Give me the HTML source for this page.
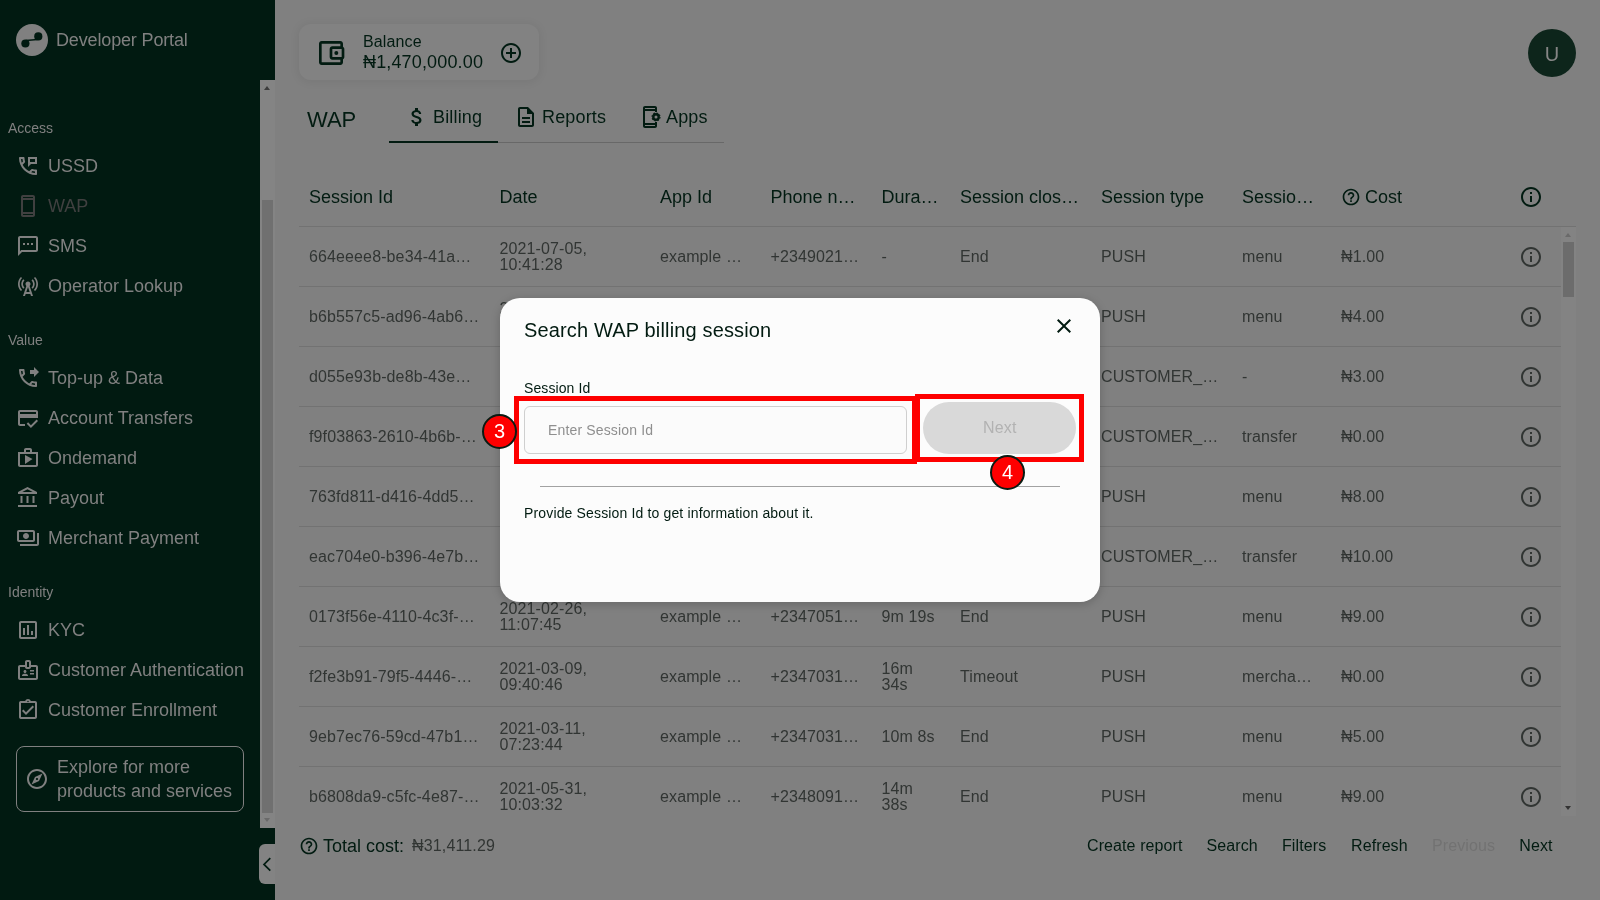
<!DOCTYPE html>
<html lang="en">
<head>
<meta charset="utf-8">
<title>Developer Portal</title>
<style>
*{box-sizing:border-box;margin:0;padding:0}
html,body{width:1600px;height:900px;overflow:hidden}
body{position:relative;background:#808080;font-family:"Liberation Sans","DejaVu Sans",sans-serif;color:#021b11}
.t{position:absolute;white-space:nowrap;line-height:20px}
svg{position:absolute;display:block}
#wrap{position:absolute;left:0;top:0;width:1600px;height:900px;will-change:transform}
#side{position:absolute;left:0;top:0;width:275px;height:900px;background:#011a11}
#side .t{color:#808080}
#side svg{fill:#808080}
#side .dis{color:#404040}
#side svg.dis{fill:#404040}
.nav{font-size:18px;left:48px}
.sec{font-size:14px;left:8px}
#sbar{position:absolute;left:260px;top:80px;width:15px;height:748px;background:#848484}
#sthumb{position:absolute;left:2px;top:120px;width:11px;height:613px;background:#707070}
.arr{position:absolute;width:0;height:0;border-left:3.5px solid transparent;border-right:3.5px solid transparent}
#explore{position:absolute;left:16px;top:746px;width:228px;height:66px;border:1px solid #808080;border-radius:8px}
#collapse{position:absolute;left:259px;top:844px;width:16px;height:40px;background:#838383;border-radius:6px 0 0 6px}
#card{position:absolute;left:299px;top:24px;width:240px;height:56px;border-radius:12px;background:#828282;box-shadow:0 1px 8px 2px rgba(0,0,0,0.06)}
#avatar{position:absolute;left:1528px;top:29px;width:48px;height:48px;border-radius:50%;background:#0d251b;color:#858585;font-size:20px;line-height:50px;text-align:center}
.hd{font-size:18px;color:#021b11;letter-spacing:0}
.c{font-size:16px;color:#313533;line-height:16px;letter-spacing:0.12px}
.ln{position:absolute;left:299px;width:1262px;height:1px;background:#727272}
.dk{fill:#021b11}
.rw{fill:#313533}
.act{font-size:16px;color:#021b11;top:836px;letter-spacing:0.1px}
#tbar{position:absolute;left:1561px;top:227px;width:15px;height:589px;background:#838383}
#tthumb{position:absolute;left:2px;top:15px;width:11px;height:55px;background:#6c6c6c}
#modal{position:absolute;left:500px;top:298px;width:600px;height:304px;border-radius:20px;background:#fcfcfc;box-shadow:0 2px 9px 1px rgba(0,0,0,0.17)}
.red{position:absolute;border:5px solid #fe0000}
.num{position:absolute;width:35px;height:35px;border-radius:50%;background:#fe0000;border:2px solid #0a1a12;color:#fff;font-size:20px;line-height:31px;text-align:center}
</style>
</head>
<body>
<div id="wrap">

<div id="side">
<svg style="left:16px;top:24px" width="32" height="32" viewBox="0 0 32 32"><circle cx="16" cy="16" r="16" fill="#808080"/><circle cx="22.3" cy="12.4" r="4.1" fill="#011a11"/><circle cx="9.4" cy="19.5" r="4.1" fill="#011a11"/><path d="M10 16.6 L21.5 15.4" stroke="#011a11" stroke-width="1.5" fill="none"/></svg>
<div class="t" style="left:56px;top:30px;font-size:18px;letter-spacing:-0.15px">Developer Portal</div>
<div class="t sec" style="top:118px">Access</div>
<svg style="left:16px;top:154px" width="24" height="24" viewBox="0 0 24 24"><path d="M20 15.5c-1.25 0-2.45-.2-3.57-.57-.1-.03-.21-.05-.31-.05-.26 0-.51.1-.71.29l-2.2 2.2c-2.83-1.44-5.15-3.75-6.59-6.59l2.2-2.21c.28-.26.36-.65.25-1C8.7 6.45 8.5 5.25 8.5 4c0-.55-.45-1-1-1H4c-.55 0-1 .45-1 1 0 9.39 7.61 17 17 17 .55 0 1-.45 1-1v-3.500c0-.55-.45-1-1-1zM5.030 5h1.500c.07.88.22 1.750.45 2.580l-1.200 1.210c-.4-1.210-.66-2.470-.75-3.790zM19 18.970c-1.320-.09-2.600-.35-3.800-.76l1.200-1.200c.85.24 1.720.39 2.600.45v1.510zM12 3v10l3-3h6V3h-9zm7 5h-5V5h5v3z"/></svg>
<div class="t nav" style="top:156px">USSD</div>
<svg class="dis" style="left:16px;top:194px" width="24" height="24" viewBox="0 0 24 24"><path d="M17 1.010L7 1c-1.100 0-1.990.9-1.990 2v18c0 1.100.89 2 1.990 2h10c1.100 0 2-.9 2-2V3c0-1.100-.9-1.990-2-1.990zM17 21H7v-1h10v1zm0-3H7V6h10v12zM7 4V3h10v1H7z"/></svg>
<div class="t nav dis" style="top:196px">WAP</div>
<svg style="left:16px;top:234px" width="24" height="24" viewBox="0 0 24 24"><path d="M20 2H4c-1.100 0-2 .9-2 2v18l4-4h14c1.100 0 2-.9 2-2V4c0-1.100-.9-2-2-2zm0 14H5.170L4 17.170V4h16v12zM7 9h2v2H7zm4 0h2v2h-2zm4 0h2v2h-2z"/></svg>
<div class="t nav" style="top:236px">SMS</div>
<svg style="left:16px;top:274px" width="24" height="24" viewBox="0 0 24 24"><path d="M7.300 14.700l1.200-1.200c-1-1-1.500-2.300-1.500-3.500 0-1.300.5-2.600 1.500-3.500L7.300 5.300c-1.300 1.300-2 3-2 4.700s.7 3.400 2 4.700zM19.100 2.900l-1.200 1.200c1.600 1.600 2.400 3.800 2.400 5.900 0 2.100-.8 4.300-2.400 5.900l1.200 1.200c2-2 2.900-4.500 2.900-7.100 0-2.600-1-5.100-2.900-7.100zM6.100 4.100L4.900 2.900C3 4.900 2 7.400 2 10c0 2.600 1 5.100 2.900 7.100l1.200-1.200c-1.600-1.600-2.400-3.800-2.400-5.900 0-2.100.8-4.300 2.400-5.900zM16.700 14.700c1.300-1.300 2-3 2-4.700-.1-1.700-.7-3.400-2-4.700l-1.200 1.200c1 1 1.500 2.300 1.500 3.500 0 1.300-.5 2.600-1.500 3.500l1.200 1.200zM14.500 10c0-1.380-1.120-2.500-2.500-2.500S9.500 8.620 9.500 10c0 .76.34 1.420.87 1.880L7 22h2l.67-2h4.670L15 22h2l-3.370-10.120c.53-.46.87-1.120.87-1.880zm-4.170 8L12 13l1.670 5h-3.340z"/></svg>
<div class="t nav" style="top:276px">Operator Lookup</div>
<div class="t sec" style="top:330px">Value</div>
<svg style="left:16px;top:366px" width="24" height="24" viewBox="0 0 24 24"><path d="M20 15.510c-1.240 0-2.450-.2-3.570-.57-.35-.12-.75-.03-1.020.24l-2.200 2.200c-2.830-1.450-5.150-3.760-6.590-6.590l2.200-2.200c.28-.28.36-.67.25-1.020C8.700 6.450 8.500 5.250 8.500 4c0-.55-.45-1-1-1H4c-.55 0-1 .45-1 1 0 9.390 7.610 17 17 17 .55 0 1-.45 1-1v-3.490c0-.55-.45-1-1-1zM5.030 5h1.500c.07.89.22 1.760.46 2.590l-1.200 1.200c-.41-1.200-.67-2.470-.76-3.790zM19 18.970c-1.320-.09-2.590-.35-3.800-.75l1.190-1.190c.85.24 1.720.39 2.600.45v1.490h.01zM18 11l5-5-5-5v3h-4v4h4v3z"/></svg>
<div class="t nav" style="top:368px">Top-up &amp; Data</div>
<svg style="left:16px;top:406px" width="24" height="24" viewBox="0 0 24 24"><path d="M20 4H4c-1.110 0-1.990.89-1.990 2L2 18c0 1.110.89 2 2 2h5v-2H4v-6h18V6c0-1.110-.89-2-2-2zm0 4H4V6h16v2zm-5.070 11.170l-2.830-2.830-1.410 1.410L14.930 22 22 14.930l-1.410-1.410-5.660 5.650z"/></svg>
<div class="t nav" style="top:408px">Account Transfers</div>
<svg style="left:16px;top:446px" width="24" height="24" viewBox="0 0 24 24"><path d="M16 6V4c0-1.110-.89-2-2-2h-4c-1.110 0-2 .89-2 2v2H2v13c0 1.110.89 2 2 2h16c1.110 0 2-.89 2-2V6h-6zm-6-2h4v2h-4V4zm10 15H4V8h16v11zM9 18l7.500-5L9 9z"/></svg>
<div class="t nav" style="top:448px">Ondemand</div>
<svg style="left:16px;top:486px" width="24" height="24" viewBox="0 0 24 24"><path d="M6.500 10h-2v7h2v-7zm6 0h-2v7h2v-7zm8.500 9H2v2h19v-2zm-2.500-9h-2v7h2v-7zm-7-6.740L16.710 6H6.290l5.210-2.740m0-2.260L2 6v2h19V6l-9.500-5z"/></svg>
<div class="t nav" style="top:488px">Payout</div>
<svg style="left:16px;top:526px" width="24" height="24" viewBox="0 0 24 24"><path d="M19 14V6c0-1.100-.9-2-2-2H3c-1.100 0-2 .9-2 2v8c0 1.100.9 2 2 2h14c1.100 0 2-.9 2-2zm-2 0H3V6h14v8zm-7-7c-1.660 0-3 1.340-3 3s1.340 3 3 3 3-1.340 3-3-1.340-3-3-3zm13 0v11c0 1.100-.9 2-2 2H4v-2h17V7h2z"/></svg>
<div class="t nav" style="top:528px">Merchant Payment</div>
<div class="t sec" style="top:582px">Identity</div>
<svg style="left:16px;top:618px" width="24" height="24" viewBox="0 0 24 24"><path d="M19 3H5c-1.100 0-2 .9-2 2v14c0 1.100.9 2 2 2h14c1.100 0 2-.9 2-2V5c0-1.100-.9-2-2-2zm0 16H5V5h14v14zM7 10h2v7H7zm4-3h2v10h-2zm4 6h2v4h-2z"/></svg>
<div class="t nav" style="top:620px">KYC</div>
<svg style="left:16px;top:658px" width="24" height="24" viewBox="0 0 24 24"><path d="M14 13.500h4V12h-4v1.500zm0 3h4V15h-4v1.500zM20 7h-5V4c0-1.100-.9-2-2-2h-2c-1.100 0-2 .9-2 2v3H4c-1.100 0-2 .9-2 2v11c0 1.100.9 2 2 2h16c1.100 0 2-.9 2-2V9c0-1.100-.9-2-2-2zm-9-3h2v5h-2V4zm9 16H4V9h5c0 1.100.9 2 2 2h2c1.100 0 2-.9 2-2h5v11zM9 15c.83 0 1.500-.67 1.500-1.500S9.830 12 9 12s-1.500.67-1.500 1.500S8.170 15 9 15zm2.080 1.180C10.440 15.900 9.740 15.750 9 15.750s-1.440.15-2.080.43c-.56.24-.92.78-.92 1.390V18h6v-.43c0-.61-.36-1.150-.92-1.390z"/></svg>
<div class="t nav" style="top:660px">Customer Authentication</div>
<svg style="left:16px;top:698px" width="24" height="24" viewBox="0 0 24 24"><path d="M18 9l-1.400-1.400-6.600 6.600-2.600-2.600L6 13l4 4zm1-6h-4.180C14.400 1.840 13.300 1 12 1c-1.300 0-2.400.84-2.820 2H5c-.14 0-.27.01-.4.04-.39.08-.74.28-1.010.55-.18.18-.33.4-.43.64-.1.230-.16.490-.16.770v14c0 .27.06.54.16.78s.25.45.43.64c.27.27.62.47 1.010.55.13.02.26.03.4.03h14c1.100 0 2-.9 2-2V5c0-1.100-.9-2-2-2zm-7-.25c.41 0 .75.34.75.75s-.34.75-.75.75-.75-.34-.75-.75.34-.75.75-.75zM19 19H5V5h14v14z"/></svg>
<div class="t nav" style="top:700px">Customer Enrollment</div>
<div id="explore"></div>
<svg style="left:25px;top:767px" width="24" height="24" viewBox="0 0 24 24"><path d="M12 2C6.480 2 2 6.480 2 12s4.480 10 10 10 10-4.480 10-10S17.520 2 12 2zm0 18c-4.410 0-8-3.590-8-8s3.590-8 8-8 8 3.590 8 8-3.590 8-8 8zm-5.500-2.500l7.510-3.490L17.500 6.500 9.990 9.990 6.500 17.500zm5.500-6.600c.61 0 1.100.49 1.100 1.100s-.49 1.100-1.100 1.100-1.100-.49-1.100-1.100.49-1.100 1.100-1.100z"/></svg>
<div class="t" style="left:57px;top:755px;font-size:18px;line-height:24px;white-space:normal;width:185px">Explore for more products and services</div>
</div>
<div id="sbar"><div id="sthumb"></div><div class="arr" style="left:4px;top:6px;border-bottom:4px solid #3c3c3c"></div><div class="arr" style="left:4px;top:738px;border-top:4px solid #6a6a6a"></div></div>
<div id="collapse"><svg style="left:0;top:0" width="16" height="40" viewBox="0 0 16 40"><path d="M11.3 14.2 L5 20.4 L11.3 26.6" fill="none" stroke="#021b11" stroke-width="1.7"/></svg></div>
<div id="card"></div>
<svg style="left:315px;top:37px" width="32" height="32" viewBox="0 0 24 24" fill="#021b11"><path d="M21 7.280V5c0-1.100-.9-2-2-2H5c-1.110 0-2 .9-2 2v14c0 1.100.89 2 2 2h14c1.100 0 2-.9 2-2v-2.280c.59-.35 1-.98 1-1.720V9c0-.74-.41-1.370-1-1.720zM20 9v6h-7V9h7zM5 19V5h14v2h-6c-1.100 0-2 .9-2 2v6c0 1.100.9 2 2 2h6v2H5z M17.500 12a1.500 1.500 0 1 1-3 0a1.500 1.500 0 1 1 3 0z"/></svg>
<div class="t" style="left:363px;top:32px;font-size:16px;letter-spacing:0.13px">Balance</div>
<div class="t" style="left:363px;top:52px;font-size:18px;letter-spacing:0.15px">₦1,470,000.00</div>
<svg style="left:499px;top:41px" width="24" height="24" viewBox="0 0 24 24" fill="#021b11"><path d="M13 7h-2v4H7v2h4v4h2v-4h4v-2h-4V7zm-1-5C6.480 2 2 6.480 2 12s4.480 10 10 10 10-4.480 10-10S17.520 2 12 2zm0 18c-4.410 0-8-3.590-8-8s3.590-8 8-8 8 3.590 8 8-3.590 8-8 8z"/></svg>
<div id="avatar">U</div>
<div class="t" style="left:307px;top:108px;font-size:22px;line-height:24px">WAP</div>
<svg style="left:405px;top:105px" width="24" height="24" viewBox="0 0 24 24" fill="#021b11"><path d="M11.800 10.900c-2.270-.59-3-1.200-3-2.150 0-1.090 1.010-1.850 2.700-1.850 1.780 0 2.440.85 2.500 2.100h2.210c-.07-1.720-1.120-3.300-3.210-3.810V3h-3v2.160c-1.940.42-3.500 1.680-3.500 3.610 0 2.310 1.910 3.460 4.700 4.130 2.500.6 3 1.480 3 2.410 0 .69-.49 1.790-2.700 1.790-2.060 0-2.870-.92-2.980-2.100h-2.200c.12 2.190 1.760 3.420 3.680 3.830V21h3v-2.150c1.950-.37 3.500-1.500 3.500-3.550 0-2.840-2.430-3.810-4.700-4.400z"/></svg>
<div class="t hd" style="left:433px;top:107px;letter-spacing:0.16px">Billing</div>
<svg style="left:514px;top:105px" width="24" height="24" viewBox="0 0 24 24" fill="#021b11"><path d="M8 16h8v2H8zm0-4h8v2H8zm6-10H6c-1.100 0-2 .9-2 2v16c0 1.100.89 2 1.990 2H18c1.100 0 2-.9 2-2V8l-6-6zm4 18H6V4h7v5h5v11z"/></svg>
<div class="t hd" style="left:542px;top:107px;letter-spacing:0.16px">Reports</div>
<svg style="left:638px;top:105px" width="24" height="24" viewBox="0 0 24 24" fill="#021b11"><path d="M17 18H7V6h10v1h2V3c0-1.100-.9-2-2-2H7c-1.100 0-2 .9-2 2v18c0 1.100.9 2 2 2h10c1.100 0 2-.9 2-2v-4h-2v1zM7 3h10v1H7V3zm10 18H7v-1h10v1z"/><circle cx="18" cy="12" r="2.7" fill="none" stroke="#021b11" stroke-width="2.4"/><circle cx="18" cy="12" r="4" fill="none" stroke="#021b11" stroke-width="1.1" stroke-dasharray="1.6 1.54"/></svg>
<div class="t hd" style="left:666px;top:107px;letter-spacing:0.16px">Apps</div>
<div style="position:absolute;left:389px;top:142px;width:335px;height:1px;background:#686868"></div>
<div style="position:absolute;left:389px;top:141px;width:109px;height:2px;background:#021b11"></div>
<div class="t hd" style="left:309px;top:187px">Session Id</div>
<div class="t hd" style="left:499.5px;top:187px">Date</div>
<div class="t hd" style="left:660px;top:187px">App Id</div>
<div class="t hd" style="left:770.5px;top:187px">Phone n…</div>
<div class="t hd" style="left:881.5px;top:187px">Dura…</div>
<div class="t hd" style="left:960px;top:187px">Session clos…</div>
<div class="t hd" style="left:1101px;top:187px">Session type</div>
<div class="t hd" style="left:1242px;top:187px">Sessio…</div>
<svg style="left:1341px;top:187px" width="20" height="20" viewBox="0 0 24 24" fill="#021b11"><path d="M11 18h2v-2h-2v2zm1-16C6.480 2 2 6.480 2 12s4.480 10 10 10 10-4.480 10-10S17.520 2 12 2zm0 18c-4.410 0-8-3.590-8-8s3.590-8 8-8 8 3.590 8 8-3.590 8-8 8zm0-14c-2.210 0-4 1.790-4 4h2c0-1.100.9-2 2-2s2 .9 2 2c0 2-3 1.750-3 5h2c0-2.250 3-2.500 3-5 0-2.210-1.790-4-4-4z"/></svg>
<div class="t hd" style="left:1365px;top:187px">Cost</div>
<svg style="left:1519px;top:185px" width="24" height="24" viewBox="0 0 24 24" fill="#021b11"><path d="M11 7h2v2h-2zm0 4h2v6h-2zm1-9C6.480 2 2 6.480 2 12s4.480 10 10 10 10-4.480 10-10S17.520 2 12 2zm0 18c-4.410 0-8-3.590-8-8s3.590-8 8-8 8 3.590 8 8-3.590 8-8 8z"/></svg>
<div class="ln" style="top:226px;width:1277px"></div>
<div class="t c" style="left:309px;top:249px">664eeee8-be34-41a…</div>
<div class="t c" style="left:499.5px;top:241px">2021-07-05,</div>
<div class="t c" style="left:499.5px;top:257px">10:41:28</div>
<div class="t c" style="left:660px;top:249px">example …</div>
<div class="t c" style="left:770.5px;top:249px">+2349021…</div>
<div class="t c" style="left:881.5px;top:249px">-</div>
<div class="t c" style="left:960px;top:249px">End</div>
<div class="t c" style="left:1101px;top:249px">PUSH</div>
<div class="t c" style="left:1242px;top:249px">menu</div>
<div class="t c" style="left:1341px;top:249px">₦1.00</div>
<svg style="left:1519px;top:244.5px" width="24" height="24" viewBox="0 0 24 24" fill="#313533"><path d="M11 7h2v2h-2zm0 4h2v6h-2zm1-9C6.480 2 2 6.480 2 12s4.480 10 10 10 10-4.480 10-10S17.520 2 12 2zm0 18c-4.410 0-8-3.590-8-8s3.590-8 8-8 8 3.590 8 8-3.590 8-8 8z"/></svg>
<div class="ln" style="top:286px"></div>
<div class="t c" style="left:309px;top:309px">b6b557c5-ad96-4ab6…</div>
<div class="t c" style="left:499.5px;top:301px">2021-06-20,</div>
<div class="t c" style="left:499.5px;top:317px">12:20:11</div>
<div class="t c" style="left:660px;top:309px">example …</div>
<div class="t c" style="left:770.5px;top:309px">+2348091…</div>
<div class="t c" style="left:881.5px;top:309px">4m 2s</div>
<div class="t c" style="left:960px;top:309px">End</div>
<div class="t c" style="left:1101px;top:309px">PUSH</div>
<div class="t c" style="left:1242px;top:309px">menu</div>
<div class="t c" style="left:1341px;top:309px">₦4.00</div>
<svg style="left:1519px;top:304.5px" width="24" height="24" viewBox="0 0 24 24" fill="#313533"><path d="M11 7h2v2h-2zm0 4h2v6h-2zm1-9C6.480 2 2 6.480 2 12s4.480 10 10 10 10-4.480 10-10S17.520 2 12 2zm0 18c-4.410 0-8-3.590-8-8s3.590-8 8-8 8 3.590 8 8-3.590 8-8 8z"/></svg>
<div class="ln" style="top:346px"></div>
<div class="t c" style="left:309px;top:369px">d055e93b-de8b-43e…</div>
<div class="t c" style="left:499.5px;top:361px">2021-04-02,</div>
<div class="t c" style="left:499.5px;top:377px">08:14:52</div>
<div class="t c" style="left:660px;top:369px">example …</div>
<div class="t c" style="left:770.5px;top:369px">+2347031…</div>
<div class="t c" style="left:881.5px;top:369px">3m 7s</div>
<div class="t c" style="left:960px;top:369px">End</div>
<div class="t c" style="left:1101px;top:369px">CUSTOMER_…</div>
<div class="t c" style="left:1242px;top:369px">-</div>
<div class="t c" style="left:1341px;top:369px">₦3.00</div>
<svg style="left:1519px;top:364.5px" width="24" height="24" viewBox="0 0 24 24" fill="#313533"><path d="M11 7h2v2h-2zm0 4h2v6h-2zm1-9C6.480 2 2 6.480 2 12s4.480 10 10 10 10-4.480 10-10S17.520 2 12 2zm0 18c-4.410 0-8-3.590-8-8s3.590-8 8-8 8 3.590 8 8-3.590 8-8 8z"/></svg>
<div class="ln" style="top:406px"></div>
<div class="t c" style="left:309px;top:429px">f9f03863-2610-4b6b-…</div>
<div class="t c" style="left:499.5px;top:421px">2021-01-15,</div>
<div class="t c" style="left:499.5px;top:437px">16:45:09</div>
<div class="t c" style="left:660px;top:429px">example …</div>
<div class="t c" style="left:770.5px;top:429px">+2349021…</div>
<div class="t c" style="left:881.5px;top:429px">-</div>
<div class="t c" style="left:960px;top:429px">Timeout</div>
<div class="t c" style="left:1101px;top:429px">CUSTOMER_…</div>
<div class="t c" style="left:1242px;top:429px">transfer</div>
<div class="t c" style="left:1341px;top:429px">₦0.00</div>
<svg style="left:1519px;top:424.5px" width="24" height="24" viewBox="0 0 24 24" fill="#313533"><path d="M11 7h2v2h-2zm0 4h2v6h-2zm1-9C6.480 2 2 6.480 2 12s4.480 10 10 10 10-4.480 10-10S17.520 2 12 2zm0 18c-4.410 0-8-3.590-8-8s3.590-8 8-8 8 3.590 8 8-3.590 8-8 8z"/></svg>
<div class="ln" style="top:466px"></div>
<div class="t c" style="left:309px;top:489px">763fd811-d416-4dd5…</div>
<div class="t c" style="left:499.5px;top:481px">2021-05-08,</div>
<div class="t c" style="left:499.5px;top:497px">13:02:37</div>
<div class="t c" style="left:660px;top:489px">example …</div>
<div class="t c" style="left:770.5px;top:489px">+2347051…</div>
<div class="t c" style="left:881.5px;top:489px">8m 4s</div>
<div class="t c" style="left:960px;top:489px">End</div>
<div class="t c" style="left:1101px;top:489px">PUSH</div>
<div class="t c" style="left:1242px;top:489px">menu</div>
<div class="t c" style="left:1341px;top:489px">₦8.00</div>
<svg style="left:1519px;top:484.5px" width="24" height="24" viewBox="0 0 24 24" fill="#313533"><path d="M11 7h2v2h-2zm0 4h2v6h-2zm1-9C6.480 2 2 6.480 2 12s4.480 10 10 10 10-4.480 10-10S17.520 2 12 2zm0 18c-4.410 0-8-3.590-8-8s3.590-8 8-8 8 3.590 8 8-3.590 8-8 8z"/></svg>
<div class="ln" style="top:526px"></div>
<div class="t c" style="left:309px;top:549px">eac704e0-b396-4e7b…</div>
<div class="t c" style="left:499.5px;top:541px">2021-06-01,</div>
<div class="t c" style="left:499.5px;top:557px">09:30:18</div>
<div class="t c" style="left:660px;top:549px">example …</div>
<div class="t c" style="left:770.5px;top:549px">+2348091…</div>
<div class="t c" style="left:881.5px;top:541px">10m</div>
<div class="t c" style="left:881.5px;top:557px">12s</div>
<div class="t c" style="left:960px;top:549px">End</div>
<div class="t c" style="left:1101px;top:549px">CUSTOMER_…</div>
<div class="t c" style="left:1242px;top:549px">transfer</div>
<div class="t c" style="left:1341px;top:549px">₦10.00</div>
<svg style="left:1519px;top:544.5px" width="24" height="24" viewBox="0 0 24 24" fill="#313533"><path d="M11 7h2v2h-2zm0 4h2v6h-2zm1-9C6.480 2 2 6.480 2 12s4.480 10 10 10 10-4.480 10-10S17.520 2 12 2zm0 18c-4.410 0-8-3.590-8-8s3.590-8 8-8 8 3.590 8 8-3.590 8-8 8z"/></svg>
<div class="ln" style="top:586px"></div>
<div class="t c" style="left:309px;top:609px">0173f56e-4110-4c3f-…</div>
<div class="t c" style="left:499.5px;top:601px">2021-02-26,</div>
<div class="t c" style="left:499.5px;top:617px">11:07:45</div>
<div class="t c" style="left:660px;top:609px">example …</div>
<div class="t c" style="left:770.5px;top:609px">+2347051…</div>
<div class="t c" style="left:881.5px;top:609px">9m 19s</div>
<div class="t c" style="left:960px;top:609px">End</div>
<div class="t c" style="left:1101px;top:609px">PUSH</div>
<div class="t c" style="left:1242px;top:609px">menu</div>
<div class="t c" style="left:1341px;top:609px">₦9.00</div>
<svg style="left:1519px;top:604.5px" width="24" height="24" viewBox="0 0 24 24" fill="#313533"><path d="M11 7h2v2h-2zm0 4h2v6h-2zm1-9C6.480 2 2 6.480 2 12s4.480 10 10 10 10-4.480 10-10S17.520 2 12 2zm0 18c-4.410 0-8-3.590-8-8s3.590-8 8-8 8 3.590 8 8-3.590 8-8 8z"/></svg>
<div class="ln" style="top:646px"></div>
<div class="t c" style="left:309px;top:669px">f2fe3b91-79f5-4446-…</div>
<div class="t c" style="left:499.5px;top:661px">2021-03-09,</div>
<div class="t c" style="left:499.5px;top:677px">09:40:46</div>
<div class="t c" style="left:660px;top:669px">example …</div>
<div class="t c" style="left:770.5px;top:669px">+2347031…</div>
<div class="t c" style="left:881.5px;top:661px">16m</div>
<div class="t c" style="left:881.5px;top:677px">34s</div>
<div class="t c" style="left:960px;top:669px">Timeout</div>
<div class="t c" style="left:1101px;top:669px">PUSH</div>
<div class="t c" style="left:1242px;top:669px">mercha…</div>
<div class="t c" style="left:1341px;top:669px">₦0.00</div>
<svg style="left:1519px;top:664.5px" width="24" height="24" viewBox="0 0 24 24" fill="#313533"><path d="M11 7h2v2h-2zm0 4h2v6h-2zm1-9C6.480 2 2 6.480 2 12s4.480 10 10 10 10-4.480 10-10S17.520 2 12 2zm0 18c-4.410 0-8-3.590-8-8s3.590-8 8-8 8 3.590 8 8-3.590 8-8 8z"/></svg>
<div class="ln" style="top:706px"></div>
<div class="t c" style="left:309px;top:729px">9eb7ec76-59cd-47b1…</div>
<div class="t c" style="left:499.5px;top:721px">2021-03-11,</div>
<div class="t c" style="left:499.5px;top:737px">07:23:44</div>
<div class="t c" style="left:660px;top:729px">example …</div>
<div class="t c" style="left:770.5px;top:729px">+2347031…</div>
<div class="t c" style="left:881.5px;top:729px">10m 8s</div>
<div class="t c" style="left:960px;top:729px">End</div>
<div class="t c" style="left:1101px;top:729px">PUSH</div>
<div class="t c" style="left:1242px;top:729px">menu</div>
<div class="t c" style="left:1341px;top:729px">₦5.00</div>
<svg style="left:1519px;top:724.5px" width="24" height="24" viewBox="0 0 24 24" fill="#313533"><path d="M11 7h2v2h-2zm0 4h2v6h-2zm1-9C6.480 2 2 6.480 2 12s4.480 10 10 10 10-4.480 10-10S17.520 2 12 2zm0 18c-4.410 0-8-3.590-8-8s3.590-8 8-8 8 3.590 8 8-3.590 8-8 8z"/></svg>
<div class="ln" style="top:766px"></div>
<div class="t c" style="left:309px;top:789px">b6808da9-c5fc-4e87-…</div>
<div class="t c" style="left:499.5px;top:781px">2021-05-31,</div>
<div class="t c" style="left:499.5px;top:797px">10:03:32</div>
<div class="t c" style="left:660px;top:789px">example …</div>
<div class="t c" style="left:770.5px;top:789px">+2348091…</div>
<div class="t c" style="left:881.5px;top:781px">14m</div>
<div class="t c" style="left:881.5px;top:797px">38s</div>
<div class="t c" style="left:960px;top:789px">End</div>
<div class="t c" style="left:1101px;top:789px">PUSH</div>
<div class="t c" style="left:1242px;top:789px">menu</div>
<div class="t c" style="left:1341px;top:789px">₦9.00</div>
<svg style="left:1519px;top:784.5px" width="24" height="24" viewBox="0 0 24 24" fill="#313533"><path d="M11 7h2v2h-2zm0 4h2v6h-2zm1-9C6.480 2 2 6.480 2 12s4.480 10 10 10 10-4.480 10-10S17.520 2 12 2zm0 18c-4.410 0-8-3.590-8-8s3.590-8 8-8 8 3.590 8 8-3.590 8-8 8z"/></svg>
<div id="tbar"><div id="tthumb"></div><div class="arr" style="left:4px;top:6px;border-bottom:4px solid #6a6a6a"></div><div class="arr" style="left:4px;top:579px;border-top:4px solid #333"></div></div>
<svg style="left:299px;top:836px" width="20" height="20" viewBox="0 0 24 24" fill="#021b11"><path d="M11 18h2v-2h-2v2zm1-16C6.480 2 2 6.480 2 12s4.480 10 10 10 10-4.480 10-10S17.520 2 12 2zm0 18c-4.410 0-8-3.590-8-8s3.590-8 8-8 8 3.590 8 8-3.590 8-8 8zm0-14c-2.210 0-4 1.790-4 4h2c0-1.100.9-2 2-2s2 .9 2 2c0 2-3 1.750-3 5h2c0-2.250 3-2.500 3-5 0-2.210-1.790-4-4-4z"/></svg>
<div class="t hd" style="left:323px;top:836px">Total cost:</div>
<div class="t c" style="left:412px;top:838px;letter-spacing:0.15px">₦31,411.29</div>
<div class="t act" style="left:1087px">Create report</div>
<div class="t act" style="left:1206.5px">Search</div>
<div class="t act" style="left:1282px">Filters</div>
<div class="t act" style="left:1351px">Refresh</div>
<div class="t act" style="left:1432px;color:#727272">Previous</div>
<div class="t act" style="left:1519.3px">Next</div>
<div id="modal"></div>
<div class="t" style="left:524px;top:318px;font-size:20px;line-height:24px;letter-spacing:0.15px;color:#021b11">Search WAP billing session</div>
<svg style="left:1052px;top:314px" width="24" height="24" viewBox="0 0 24 24" fill="#021b11"><path d="M19 6.410L17.590 5 12 10.590 6.410 5 5 6.410 10.590 12 5 17.590 6.410 19 12 13.410 17.590 19 19 17.590 13.410 12z"/></svg>
<div class="t" style="left:524px;top:378px;font-size:14px;letter-spacing:0.1px;color:#021b11">Session Id</div>
<div style="position:absolute;left:524px;top:406px;width:383px;height:48px;border:1px solid #cfcfcf;border-radius:6px;background:#fbfbfb"></div>
<div class="t" style="left:548px;top:420px;font-size:14px;letter-spacing:0.15px;color:#8f8f8f">Enter Session Id</div>
<div style="position:absolute;left:923px;top:402px;width:153px;height:52px;border-radius:26px;background:#d9d9d9"></div>
<div class="t" style="left:983px;top:418px;font-size:16px;letter-spacing:0.2px;color:#b2b2b2">Next</div>
<div style="position:absolute;left:540px;top:486px;width:520px;height:1px;background:#a2a2a2"></div>
<div class="t" style="left:524px;top:503px;font-size:14px;letter-spacing:0.15px;color:#021b11">Provide Session Id to get information about it.</div>
<div class="red" style="left:514px;top:396px;width:403px;height:68px"></div>
<div class="red" style="left:915px;top:394px;width:169px;height:68px"></div>
<div class="num" style="left:482px;top:414px">3</div>
<div class="num" style="left:990px;top:455px">4</div>
</div>
</body></html>
